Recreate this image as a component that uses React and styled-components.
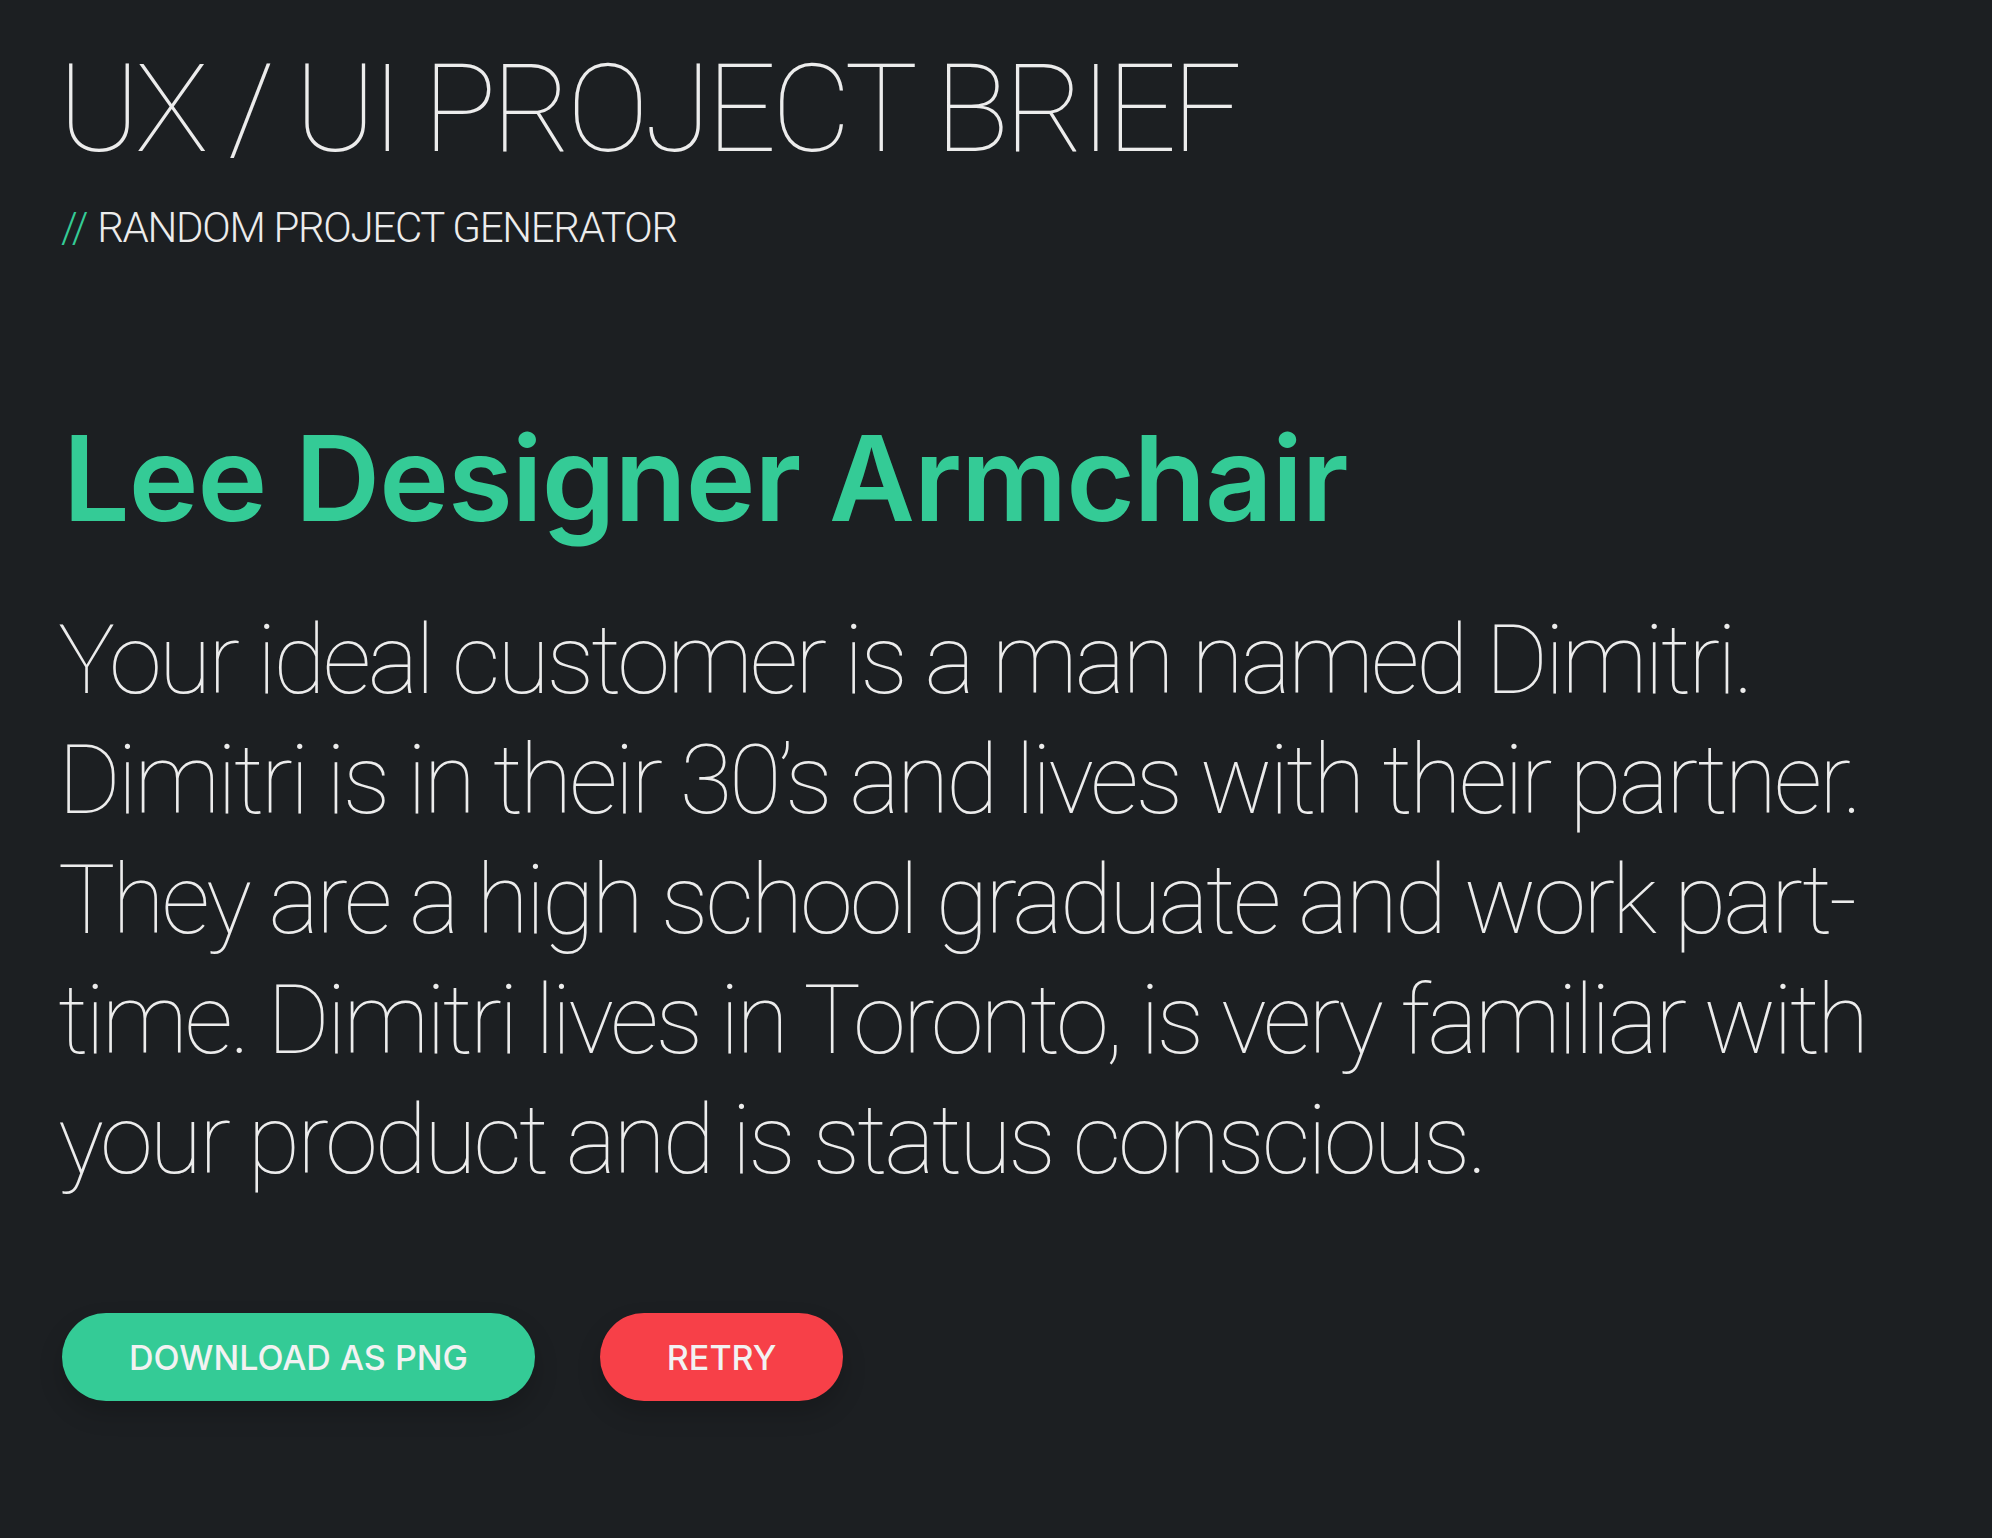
import React from 'react';
import styled, { createGlobalStyle } from 'styled-components';

const GlobalStyle = createGlobalStyle`
  html, body {
    margin: 0;
    background: #1c1f22;
  }
  body {
    font-family: Roboto, "Liberation Sans", sans-serif;
    color: #ececec;
  }
`;

const Page = styled.main`
  min-height: 100vh;
  box-sizing: border-box;
  padding: 48px 58px 80px;
  display: flex;
  flex-direction: column;
`;

const Title = styled.h1`
  margin: 0;
  font-family: Roboto, "Liberation Sans", sans-serif;
  font-weight: 100;
  font-size: 123px;
  line-height: 1;
  letter-spacing: -5px;
  white-space: nowrap;
  color: #ececec;
`;

const Subtitle = styled.h2`
  margin: 36px 0 0;
  padding-left: 3px;
  font-family: Roboto, "Liberation Sans", sans-serif;
  font-weight: 300;
  font-size: 42px;
  line-height: 1;
  letter-spacing: -1.3px;
  text-transform: uppercase;
  color: #ececec;
`;

const Slashes = styled.span`
  color: #34cb96;
  margin-right: 10px;
`;

const ProjectName = styled.h3`
  margin: 170px 0 0;
  padding-left: 5px;
  font-family: Inter, "Liberation Sans", sans-serif;
  font-weight: 600;
  font-size: 118px;
  line-height: 1;
  letter-spacing: -1px;
  color: #34cb96;
  white-space: nowrap;
`;

const Brief = styled.p`
  margin: 63px 0 0;
  font-family: Roboto, "Liberation Sans", sans-serif;
  font-weight: 100;
  font-size: 96px;
  line-height: 120px;
  letter-spacing: -3.2px;
  color: #ececec;
`;

const Line = styled.span`
  display: block;
  white-space: nowrap;
`;

const Actions = styled.div`
  margin: 113px 0 0 4px;
  display: flex;
  gap: 65px;
`;

const Button = styled.button`
  height: 88px;
  padding: 0 67px;
  border: none;
  border-radius: 44px;
  background: ${p => (p.$variant === 'danger' ? '#f74048' : '#34cb96')};
  color: #f2f2f2;
  font-family: Inter, "Liberation Sans", sans-serif;
  font-weight: 500;
  font-size: 34px;
  letter-spacing: 0;
  text-transform: uppercase;
  box-shadow: 0 12px 24px rgba(0, 0, 0, 0.18);
  cursor: pointer;
`;

const lines = [
  'Your ideal customer is a man named Dimitri.',
  'Dimitri is in their 30’s and lives with their partner.',
  'They are a high school graduate and work part-',
  'time. Dimitri lives in Toronto, is very familiar with',
  'your product and is status conscious.',
];

export default function App() {
  return (
    <Page>
      <GlobalStyle />
      <Title>UX / UI PROJECT BRIEF</Title>
      <Subtitle>
        <Slashes>//</Slashes>Random Project Generator
      </Subtitle>
      <ProjectName>Lee Designer Armchair</ProjectName>
      <Brief>
        {lines.map(l => (
          <Line key={l}>{l}</Line>
        ))}
      </Brief>
      <Actions>
        <Button>Download as PNG</Button>
        <Button $variant="danger">Retry</Button>
      </Actions>
    </Page>
  );
}
